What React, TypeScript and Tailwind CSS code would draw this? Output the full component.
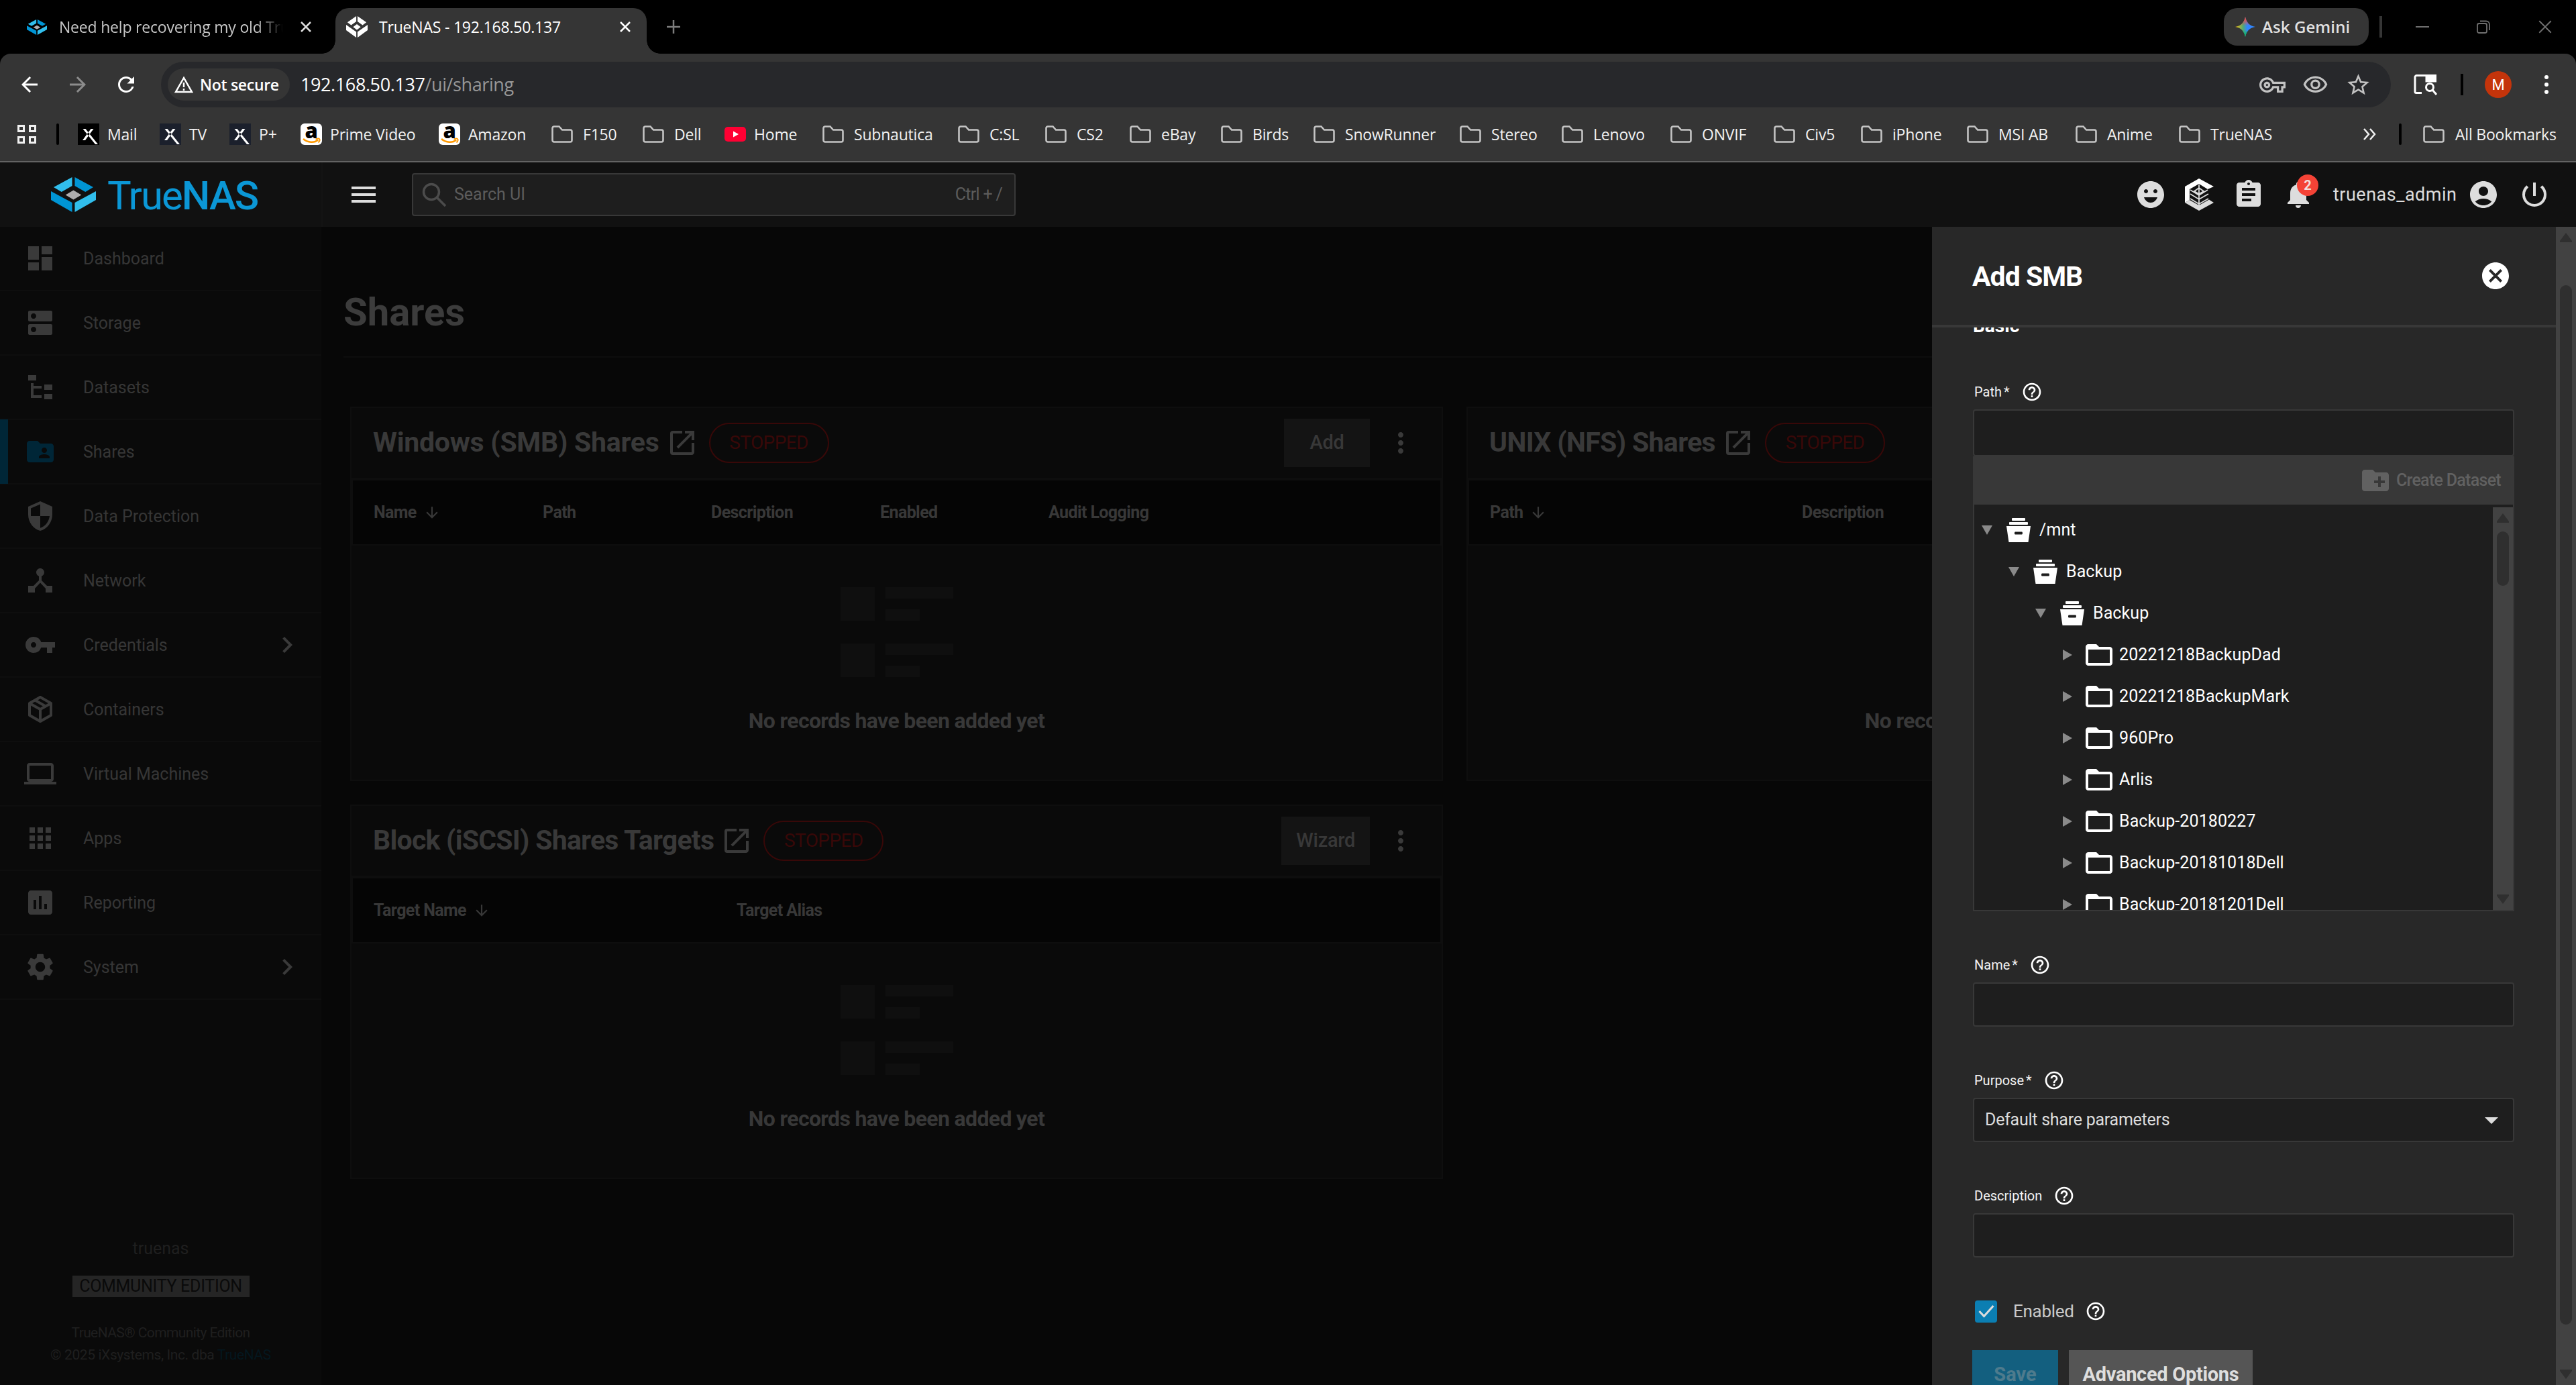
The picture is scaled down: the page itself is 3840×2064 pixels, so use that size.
import type { ReactNode } from "react";
import {
  MdAccountCircle,
  MdApps,
  MdArrowBack,
  MdArrowDownward,
  MdArrowDropDown,
  MdArrowForward,
  MdAssessment,
  MdAssignment,
  MdCancel,
  MdChevronRight,
  MdComputer,
  MdCreateNewFolder,
  MdDashboard,
  MdDeviceHub,
  MdDns,
  MdEmojiEmotions,
  MdFolderOpen,
  MdFolderShared,
  MdHelpOutline,
  MdMoreVert,
  MdNotifications,
  MdOpenInNew,
  MdOutlineVisibility,
  MdOutlineVpnKey,
  MdPowerSettingsNew,
  MdRefresh,
  MdSecurity,
  MdSettings,
  MdStarBorder,
  MdVpnKey,
} from "react-icons/md";

type Bookmark = {
  label: string;
  kind: "folder" | "x" | "xdark" | "amazon" | "youtube";
  width: string;
};

type NavItem = {
  label: string;
  icon: ReactNode;
  active?: boolean;
  expandable?: boolean;
};

type Column = { label: string; width: string; sorted?: boolean };

type TreeNode = { label: string; indent: string; open?: boolean };

const bookmarks: Bookmark[] = [
  { label: "Mail", kind: "x", width: "w-[122px]" },
  { label: "TV", kind: "xdark", width: "w-[104px]" },
  { label: "P+", kind: "xdark", width: "w-[106px]" },
  { label: "Prime Video", kind: "amazon", width: "w-[206px]" },
  { label: "Amazon", kind: "amazon", width: "w-[168px]" },
  { label: "F150", kind: "folder", width: "w-[136px]" },
  { label: "Dell", kind: "folder", width: "w-[122px]" },
  { label: "Home", kind: "youtube", width: "w-[146px]" },
  { label: "Subnautica", kind: "folder", width: "w-[202px]" },
  { label: "C:SL", kind: "folder", width: "w-[130px]" },
  { label: "CS2", kind: "folder", width: "w-[126px]" },
  { label: "eBay", kind: "folder", width: "w-[136px]" },
  { label: "Birds", kind: "folder", width: "w-[138px]" },
  { label: "SnowRunner", kind: "folder", width: "w-[218px]" },
  { label: "Stereo", kind: "folder", width: "w-[152px]" },
  { label: "Lenovo", kind: "folder", width: "w-[162px]" },
  { label: "ONVIF", kind: "folder", width: "w-[154px]" },
  { label: "Civ5", kind: "folder", width: "w-[130px]" },
  { label: "iPhone", kind: "folder", width: "w-[158px]" },
  { label: "MSI AB", kind: "folder", width: "w-[162px]" },
  { label: "Anime", kind: "folder", width: "w-[154px]" },
  { label: "TrueNAS", kind: "folder", width: "w-[160px]" },
];

const navItems: NavItem[] = [
  { label: "Dashboard", icon: <MdDashboard /> },
  { label: "Storage", icon: <MdDns /> },
  { label: "Datasets", icon: <TreeIcon /> },
  { label: "Shares", icon: <MdFolderShared />, active: true },
  { label: "Data Protection", icon: <MdSecurity /> },
  { label: "Network", icon: <MdDeviceHub /> },
  { label: "Credentials", icon: <MdVpnKey />, expandable: true },
  { label: "Containers", icon: <PackageIcon /> },
  { label: "Virtual Machines", icon: <MdComputer /> },
  { label: "Apps", icon: <MdApps /> },
  { label: "Reporting", icon: <MdAssessment /> },
  { label: "System", icon: <MdSettings />, expandable: true },
];

const smbColumns: Column[] = [
  { label: "Name", width: "w-[252px]", sorted: true },
  { label: "Path", width: "w-[251px]" },
  { label: "Description", width: "w-[252px]" },
  { label: "Enabled", width: "w-[251px]" },
  { label: "Audit Logging", width: "w-[252px]" },
];

const nfsColumns: Column[] = [
  { label: "Path", width: "w-[465px]", sorted: true },
  { label: "Description", width: "w-[465px]" },
];

const iscsiColumns: Column[] = [
  { label: "Target Name", width: "w-[541px]", sorted: true },
  { label: "Target Alias", width: "w-[541px]" },
];

const treeNodes: TreeNode[] = [
  { label: "/mnt", indent: "pl-[3px]", open: true },
  { label: "Backup", indent: "pl-[43px]", open: true },
  { label: "Backup", indent: "pl-[83px]", open: true },
  { label: "20221218BackupDad", indent: "pl-[123px]" },
  { label: "20221218BackupMark", indent: "pl-[123px]" },
  { label: "960Pro", indent: "pl-[123px]" },
  { label: "Arlis", indent: "pl-[123px]" },
  { label: "Backup-20180227", indent: "pl-[123px]" },
  { label: "Backup-20181018Dell", indent: "pl-[123px]" },
  { label: "Backup-20181201Dell", indent: "pl-[123px]" },
];

function TreeIcon() {
  return (
    <svg viewBox="0 0 24 24" width="1em" height="1em" fill="currentColor">
      <path d="M3 3h6v4H3V3m12 7h6v4h-6v-4m0 7h6v4h-6v-4m-2-4H7v5h6v2H5V9h2v2h6v2z" />
    </svg>
  );
}

function PackageIcon() {
  return (
    <svg viewBox="0 0 24 24" width="1em" height="1em" fill="currentColor">
      <path d="M21 16.5c0 .38-.21.71-.53.88l-7.9 4.44c-.16.12-.36.18-.57.18s-.41-.06-.57-.18l-7.9-4.44A.99.99 0 0 1 3 16.5v-9c0-.38.21-.71.53-.88l7.9-4.44c.16-.12.36-.18.57-.18s.41.06.57.18l7.9 4.44c.32.17.53.5.53.88v9M12 4.15l-1.89 1.07L16 8.61l1.96-1.11L12 4.15M6.04 7.5L12 10.85l1.96-1.1-5.88-3.4L6.04 7.5M5 15.91l6 3.38v-6.71L5 9.21v6.7m14 0v-6.7l-6 3.37v6.71l6-3.38z" />
    </svg>
  );
}

function TrueNasMark({ className, mono }: { className: string; mono?: boolean }) {
  const dark = mono ? "#ffffff" : "#0095d5";
  const light = mono ? "#ffffff" : "#31beec";
  return (
    <svg viewBox="0 0 68 52" className={className} preserveAspectRatio="none">
      <path d="M32 0v13L16 22 4 15z" fill={light} />
      <path d="M36 0v13l16 9 12-7z" fill={dark} />
      <path d="M34 19.500l12 7-12 7-12-7z" fill={mono ? "#ffffff" : "#aeadae"} />
      <path d="M0 21l32 17v14L0 34z" fill={dark} />
      <path d="M68 21L36 38v14l32-18z" fill={light} />
    </svg>
  );
}

function TrueCommandIcon() {
  return (
    <svg viewBox="0 0 44 48" className="h-12 w-11">
      <path d="M22 0L1 12v24l7-4V16l14-8 13 8 9-4z" fill="#fff" />
      <path d="M1 36l21 12 22-12-7-4.500-15 8.500L8 32z" fill="#dcdcdc" />
      <path
        d="M22 9v31M9 17l13 8 13-8M22 14l-7 5 7 4 7-4-7-5M9 23l13 8 14-8M9 30l13 8 14-8"
        fill="none"
        stroke="#dcdcdc"
        strokeWidth="1.800"
      />
    </svg>
  );
}

function PoolIcon() {
  return (
    <svg viewBox="0 0 36 36" className="h-9 w-9" fill="#fff">
      <rect x="8" y="0" width="20" height="4" rx="1" />
      <rect x="4" y="6" width="28" height="4" rx="1" />
      <path
        fillRule="evenodd"
        d="M0 12h36l-3.500 24h-29zM13 20.500c-1.300 0-1.300 4 0 4h10c1.300 0 1.300-4 0-4z"
      />
    </svg>
  );
}

function BookmarkFolder() {
  return (
    <svg viewBox="0 0 32 26" className="h-[26px] w-8 shrink-0">
      <path
        d="M1.500 4A2.500 2.500 0 0 1 4 1.500h7.500l4.500 5h12A2.500 2.500 0 0 1 30.500 9v13A2.500 2.500 0 0 1 28 24.500H4A2.500 2.500 0 0 1 1.500 22z"
        fill="none"
        stroke="#c4c4c4"
        strokeWidth="2.600"
      />
    </svg>
  );
}

function XfinityIcon({ dark }: { dark?: boolean }) {
  return (
    <svg viewBox="0 0 32 32" className="h-8 w-8 shrink-0">
      <rect width="32" height="32" fill={dark ? "#1b202c" : "#000"} />
      <path d="M7.500 8L26 31h4L11.500 8zM19.500 8h4l-12.500 17H7z" fill="#fff" />
    </svg>
  );
}

function AmazonIcon() {
  return (
    <div className="relative flex h-8 w-8 shrink-0 items-start justify-center rounded-md bg-white">
      <span className="font-['Open_Sans'] text-[31px] leading-[20px] font-extrabold text-black">a</span>
      <svg viewBox="0 0 32 32" className="absolute inset-0">
        <path d="M4 23c7 6 17 6 22 1.500" fill="none" stroke="#ff9900" strokeWidth="2.600" />
        <path d="M22.500 23.500c3-1.500 5.500-1.200 6 0s-.5 3.500-2 5" fill="none" stroke="#ff9900" strokeWidth="1.800" />
      </svg>
    </div>
  );
}

function BookmarkIcon({ kind }: { kind: Bookmark["kind"] }) {
  if (kind === "folder") return <BookmarkFolder />;
  if (kind === "amazon") return <AmazonIcon />;
  if (kind === "youtube") {
    return (
      <svg viewBox="0 0 32 32" className="h-8 w-8 shrink-0">
        <rect y="5" width="32" height="22" rx="5" fill="#ff0033" />
        <path d="M13 11.500v9l8-4.500z" fill="#fff" />
      </svg>
    );
  }
  return <XfinityIcon dark={kind === "xdark"} />;
}

function CrossIcon({ className }: { className: string }) {
  return (
    <svg viewBox="0 0 16 16" className={className} stroke="currentColor" fill="none">
      <path d="M1 1l14 14M15 1L1 15" />
    </svg>
  );
}

function TabStrip() {
  return (
    <div className="flex h-20 items-end bg-black text-[23px] tracking-[-0.2px]">
      <div className="flex h-20 w-[500px] items-center pl-10 text-[#c7c7c7]">
        <TrueNasMark className="h-[23px] w-[30px]" />
        <div className="ml-[18px] w-[334px] overflow-hidden whitespace-nowrap [mask-image:linear-gradient(to_right,black_295px,transparent_334px)]">
          Need help recovering my old TrueNAS
        </div>
        <CrossIcon className="ml-[26px] h-4 w-4 stroke-[2.5] text-[#dcdcdc]" />
      </div>
      <div className="relative flex h-[68px] w-[464px] items-center rounded-t-[20px] bg-[#353535] pb-3 pl-4 text-white">
        <TrueNasMark mono className="h-8 w-8" />
        <div className="ml-[17px] w-[359px] whitespace-nowrap">TrueNAS - 192.168.50.137</div>
        <CrossIcon className="h-4 w-4 stroke-[2.5]" />
        {/* outward curves at the foot of the active tab */}
        <div className="absolute bottom-0 -left-5 h-5 w-5 bg-[radial-gradient(circle_at_0_0,#000_19.5px,#353535_20px)]" />
        <div className="absolute -right-5 bottom-0 h-5 w-5 bg-[radial-gradient(circle_at_100%_0,#000_19.5px,#353535_20px)]" />
      </div>
      <div className="flex h-20 flex-1 items-center pl-[30px]">
        <svg viewBox="0 0 20 20" className="h-5 w-5" stroke="#7d7d7d" strokeWidth="2.500">
          <path d="M10 0v20M0 10h20" />
        </svg>
        <div className="ml-auto flex h-14 w-[216px] items-center rounded-[20px] bg-[#353535] pl-4 font-semibold text-[#dfdfdf]">
          <svg viewBox="0 0 32 32" className="h-8 w-8">
            <defs>
              <linearGradient id="gem" x1="0" y1="0.5" x2="1" y2="0.5">
                <stop offset="0" stopColor="#fbbc04" />
                <stop offset="0.4" stopColor="#4fa878" />
                <stop offset="0.6" stopColor="#3186ff" />
                <stop offset="1" stopColor="#3186ff" />
              </linearGradient>
              <linearGradient id="gemTop" x1="0.5" y1="0" x2="0.5" y2="1">
                <stop offset="0.1" stopColor="#f94543" />
                <stop offset="0.45" stopColor="#f94543" stopOpacity="0" />
                <stop offset="0.65" stopColor="#08b962" stopOpacity="0" />
                <stop offset="0.9" stopColor="#08b962" />
              </linearGradient>
            </defs>
            <path d="M16 1c1.500 8 6 13.500 15 15-9 1.500-13.500 7-15 15-1.500-8-6-13.500-15-15 9-1.500 13.500-7 15-15z" fill="url(#gem)" />
            <path d="M16 1c1.500 8 6 13.500 15 15-9 1.500-13.500 7-15 15-1.500-8-6-13.500-15-15 9-1.500 13.500-7 15-15z" fill="url(#gemTop)" />
          </svg>
          <span className="ml-[9px] text-2xl tracking-[0.1px] whitespace-nowrap">Ask Gemini</span>
        </div>
        <div className="ml-4 h-8 w-1 bg-[#353535]" />
        <div className="ml-[50px] h-[2px] w-5 bg-[#6f6f6f]" />
        <svg viewBox="0 0 20 20" className="ml-[71px] h-5 w-5" fill="none" stroke="#6f6f6f" strokeWidth="1.800">
          <rect x="1" y="5" width="14" height="14" rx="2.500" />
          <path d="M5 1.500h9a5 5 0 0 1 5 5V15" />
        </svg>
        <CrossIcon className="mr-9 ml-[72px] h-5 w-5 stroke-[1.5] text-[#6f6f6f]" />
      </div>
    </div>
  );
}

function Toolbar() {
  return (
    <div className="bg-black">
      <div className="flex h-20 items-center rounded-t-[16px] bg-[#353535] pt-3">
        <MdArrowBack className="ml-[26px] text-[36px] text-white" />
        <MdArrowForward className="ml-9 text-[36px] text-[#8c8c8c]" />
        <MdRefresh className="ml-9 text-[36px] text-white" />
        <div className="ml-[34px] flex h-[68px] w-[3324px] items-center rounded-full bg-[#27282b] pl-[10px]">
          <div className="flex h-12 w-[182px] items-center rounded-full bg-[#353535] pl-[10px]">
            <svg viewBox="0 0 28 26" className="h-[26px] w-7" fill="none" stroke="#fff" strokeWidth="2.500">
              <path d="M14 3L2 24h24z" />
              <path d="M14 10v7M14 19v3" />
            </svg>
            <span className="ml-[10px] text-[23px] font-semibold tracking-[-0.3px] whitespace-nowrap text-white">Not secure</span>
          </div>
          <div className="ml-4 text-[27px] tracking-[-0.4px] text-white">
            192.168.50.137<span className="text-[#979797]">/ui/sharing</span>
          </div>
          <div className="mr-[29px] ml-auto flex items-center gap-[25px] text-[39px] text-[#c2c2c2]">
            <MdOutlineVpnKey />
            <MdOutlineVisibility />
            <MdStarBorder />
          </div>
        </div>
        <svg viewBox="0 0 36 32" className="ml-[34px] h-8 w-9" fill="none" stroke="#fff" strokeWidth="3">
          <path d="M12 28.500H4A2 2 0 0 1 2 26.500V5A2.500 2.500 0 0 1 4.500 2.500h26A2.500 2.500 0 0 1 32.500 5v7" />
          <path d="M19 2.500h13.500V11H19z" fill="#fff" />
          <circle cx="24" cy="20" r="5.500" />
          <path d="M28 24l6 7" />
        </svg>
        <div className="ml-[34px] h-8 w-1 bg-black" />
        <div className="ml-8 flex h-10 w-10 items-center justify-center rounded-full bg-[#c4340b] font-['Roboto'] text-[22px] text-white">
          M
        </div>
        <div className="ml-[49px] flex flex-col gap-[5px]">
          <div className="h-[6px] w-[6px] rounded-full bg-white" />
          <div className="h-[6px] w-[6px] rounded-full bg-white" />
          <div className="h-[6px] w-[6px] rounded-full bg-white" />
        </div>
      </div>
    </div>
  );
}

function BookmarksBar() {
  return (
    <div className="flex h-[82px] items-center border-b-2 border-[#636363] bg-[#353535] text-[23px] tracking-[-0.2px] whitespace-nowrap text-[#f1f1f1]">
      <svg viewBox="0 0 28 28" className="ml-[26px] h-7 w-7" fill="none" stroke="#f1f1f1" strokeWidth="3">
        <path d="M1.500 1.500h8v8h-8zM18.500 1.500h8v8h-8zM1.500 18.500h8v8h-8zM18.500 18.500h8v8h-8z" />
      </svg>
      <div className="mr-7 ml-[30px] h-8 w-1 rounded bg-black" />
      {bookmarks.map((b) => (
        <div key={b.label} className={`flex shrink-0 items-center ${b.width} ${b.kind === "folder" ? "gap-[15px]" : "gap-3"}`}>
          <BookmarkIcon kind={b.kind} />
          <span>{b.label}</span>
        </div>
      ))}
      <svg viewBox="0 0 20 18" className="ml-auto h-[18px] w-5" fill="none" stroke="#f1f1f1" strokeWidth="2.500">
        <path d="M2 1l7 8-7 8M11 1l7 8-7 8" />
      </svg>
      <div className="mr-8 ml-[34px] h-8 w-1 rounded bg-black" />
      <div className="flex w-[228px] items-center gap-4">
        <BookmarkFolder />
        <span>All Bookmarks</span>
      </div>
    </div>
  );
}

function TopBar() {
  return (
    <header className="flex h-24 items-center bg-[#111111] text-[#dddddd]">
      <div className="flex h-full w-[481px] items-center border-r-2 border-[#141414] pl-[76px]">
        <TrueNasMark className="h-[52px] w-[67px]" />
        <div className="ml-[17px] pt-[3px] text-[60px] leading-[60px] tracking-[-2px] text-[#0b97d6]">
          True<span className="font-medium">NAS</span>
        </div>
      </div>
      <div className="ml-[43px] flex w-9 flex-col gap-[6px]">
        <div className="h-1 bg-[#dddddd]" />
        <div className="h-1 bg-[#dddddd]" />
        <div className="h-1 bg-[#dddddd]" />
      </div>
      <div className="ml-[54px] flex h-16 w-[900px] items-center rounded border-2 border-[#383838] bg-[#1e1e1e] text-[25px] text-[#5c5c5c]">
        <svg viewBox="0 0 36 36" className="ml-[13px] h-9 w-9" fill="none" stroke="#4c4c4c" strokeWidth="3.500">
          <circle cx="14" cy="14" r="11.500" />
          <path d="M22.500 22.500L35 35" />
        </svg>
        <span className="ml-3">Search UI</span>
        <span className="mr-[18px] ml-auto tracking-[-0.7px]">Ctrl + /</span>
      </div>
      <div className="mr-[38px] ml-auto flex items-center">
        <MdEmojiEmotions className="text-[48px]" />
        <div className="ml-[26px]">
          <TrueCommandIcon />
        </div>
        <MdAssignment className="ml-[28px] text-[48px]" />
        <div className="relative ml-[26px]">
          <MdNotifications className="text-[48px]" />
          <div className="absolute -top-[6px] left-[22px] flex h-8 w-8 items-center justify-center rounded-full bg-[#f44336] text-[20px] font-bold text-[#f3dedc]">
            2
          </div>
        </div>
        <span className="ml-[28px] w-[200px] text-[27px] tracking-[0.5px]">truenas_admin</span>
        <MdAccountCircle className="text-[48px]" />
        <MdPowerSettingsNew className="ml-[28px] text-[48px]" />
      </div>
    </header>
  );
}

function Sidebar() {
  return (
    <nav className="flex w-[479px] flex-col bg-[#0a0a0a] text-[25px] text-[#363636]">
      {navItems.map((item) => (
        <div
          key={item.label}
          className="flex h-[96px] shrink-0 items-center border-b-2 border-[#0e0e0e]"
        >
          <div className={`h-[96px] w-3 ${item.active ? "bg-[#002637]" : ""}`} />
          <div className={`ml-6 text-[48px] ${item.active ? "text-[#002637]" : "text-[#3a3a3a]"}`}>{item.icon}</div>
          <span className="ml-[40px] pt-[2px]">{item.label}</span>
          {item.expandable && <MdChevronRight className="mr-[27px] ml-auto text-[48px] text-[#3a3a3a]" />}
        </div>
      ))}
      <div className="mt-[343px] flex flex-col items-center text-[#1f1f1f]">
        <div className="h-[56px] leading-[56px]">truenas</div>
        <div className="mt-[12px] flex h-8 w-[264px] items-center justify-center bg-[#252525] text-[25px] tracking-[-0.3px] whitespace-nowrap text-[#0a0a0a]">
          COMMUNITY EDITION
        </div>
        <div className="mt-[37px] text-center text-[21px] leading-[33px] whitespace-nowrap">
          <div className="tracking-[-0.6px]">TrueNAS® Community Edition</div>
          <div className="tracking-[-0.4px]">
            © 2025 iXsystems, Inc. dba <span className="text-[#04171f]">TrueNAS</span>
          </div>
        </div>
      </div>
    </nav>
  );
}

type ShareCardProps = {
  title: string;
  titleTracking: string;
  action?: string;
  columns: Column[];
};

function ShareCard({ title, titleTracking, action, columns }: ShareCardProps) {
  return (
    <section className="h-[558px] w-[1629px] shrink-0 border-2 border-[#0e0e0e] bg-[#0a0a0a]">
      <div className="flex h-[104px] items-center pr-[37px] pl-8">
        <h2 className={`text-[41px] font-bold whitespace-nowrap text-[#393939] ${titleTracking}`}>{title}</h2>
        <MdOpenInNew className="ml-[10px] text-[48px] text-[#3a3a3a]" />
        <div className="ml-4 flex h-[60px] w-[179px] items-center justify-center rounded-[30px] border-2 border-[#380808] text-[28px] tracking-[-0.6px] text-[#380808]">
          STOPPED
        </div>
        {action && (
          <div className="ml-auto flex h-[72px] min-w-[128px] items-center justify-center bg-[#141414] px-[22px] text-[29px] font-medium tracking-[-0.3px]">
            {action}
          </div>
        )}
        <MdMoreVert className={`text-[48px] text-[#3a3a3a] ${action ? "ml-[22px]" : "ml-auto"}`} />
      </div>
      <div className="flex h-[101px] items-center border-2 border-t-4 border-[#0e0e0e] bg-[#050505] pl-[31px] text-[25px] font-bold tracking-[-0.6px]">
        {columns.map((col) => (
          <div key={col.label} className={`flex items-center ${col.width}`}>
            {col.label}
            {col.sorted && <MdArrowDownward className="ml-[10px] text-[26px]" />}
          </div>
        ))}
      </div>
      <div className="flex flex-col items-center pt-[62px]">
        <svg viewBox="0 0 168 134" className="h-[134px] w-[168px]" fill="#0f0f0f">
          <path d="M0 0h51v50H0zM67 0h101v17H67zM67 33h51v17H67zM0 84h51v50H0zM67 84h101v17H67zM67 117h51v17H67z" />
        </svg>
        <div className="mt-[45px] text-[32px] leading-[40px] font-bold tracking-[-0.65px] whitespace-nowrap text-[#383838]">
          No records have been added yet
        </div>
      </div>
    </section>
  );
}

function SharesPage() {
  return (
    <main className="flex-1 overflow-hidden bg-[#070707] text-[#383838]">
      <div className="ml-[33px] h-[195px] border-b-2 border-[#0d0d0d] pt-[97px]">
        <h1 className="text-[58px] leading-[60px] font-bold text-[#3c3c3c]">Shares</h1>
      </div>
      <div className="mt-[73px] ml-[43px] flex w-[3294px] flex-wrap gap-x-[35px] gap-y-[35px]">
        <ShareCard title="Windows (SMB) Shares" titleTracking="tracking-[-0.25px]" action="Add" columns={smbColumns} />
        <ShareCard title="UNIX (NFS) Shares" titleTracking="tracking-[-0.65px]" columns={nfsColumns} />
        <ShareCard
          title="Block (iSCSI) Shares Targets"
          titleTracking="tracking-[-0.75px]"
          action="Wizard"
          columns={iscsiColumns}
        />
      </div>
    </main>
  );
}

function FieldLabel({ label, required }: { label: string; required?: boolean }) {
  return (
    <div className="flex h-8 items-center pl-[2px] text-[20px] text-[#f3f3f3]">
      <span>{label}</span>
      {required && <span className="ml-[3px]">*</span>}
      <MdHelpOutline className="ml-[17px] text-[32px] text-white" />
    </div>
  );
}

function Field({ label, required, children }: { label: string; required?: boolean; children?: ReactNode }) {
  return (
    <div className="h-[172px]">
      <FieldLabel label={label} required={required} />
      <div className="mt-[10px] flex h-[66px] items-center justify-between rounded border-2 border-[#383838] bg-[#1e1e1e] pr-2 pl-4 text-[25px] tracking-[-0.25px] text-[#dddddd]">
        {children}
      </div>
    </div>
  );
}

function PathTree() {
  return (
    <div className="flex h-[606px] border-2 border-t-0 border-[#383838] bg-[#1e1e1e]">
      <div className="flex-1 overflow-hidden pt-[7px] text-[25px] tracking-[0.1px] text-white">
        {treeNodes.map((node, i) => (
          <div key={i} className={`flex h-[62px] items-center ${node.indent}`}>
            <svg viewBox="0 0 28 20" className="h-5 w-7 shrink-0" fill="#8a8a8a">
              {node.open ? <path d="M8 3h16L16 17z" /> : <path d="M9 2v16l14-8z" />}
            </svg>
            {node.open ? (
              <div className="ml-[17px] w-[49px]">
                <PoolIcon />
              </div>
            ) : (
              <MdFolderOpen className="mr-[6px] ml-[11px] shrink-0 text-[48px]" />
            )}
            <span>{node.label}</span>
          </div>
        ))}
      </div>
      <div className="mt-1 flex w-[30px] flex-col items-center justify-between bg-[#424242]">
        <svg viewBox="0 0 18 120" className="mt-[9px] h-[120px] w-[18px]" fill="#2f2f2f">
          <path d="M9 0l9 12v2H0v-2z" />
          <rect y="27" width="18" height="81" rx="9" />
        </svg>
        <svg viewBox="0 0 18 14" className="mb-[9px] h-[14px] w-[18px]" fill="#2f2f2f">
          <path d="M0 0h18v2L9 14 0 2z" />
        </svg>
      </div>
    </div>
  );
}

function AddSmbPanel() {
  return (
    <aside className="absolute top-0 right-0 flex h-full w-[960px] bg-[#282828]">
      <div className="flex w-[930px] flex-col overflow-hidden">
        <div className="flex h-[150px] shrink-0 items-center justify-between border-b-4 border-[#383838] pr-[66px] pl-[60px]">
          <h2 className="pt-[3px] text-[41px] font-bold tracking-[-1px] text-white">Add SMB</h2>
          <MdCancel className="text-[48px] text-white" />
        </div>
        <div className="h-[1576px] overflow-hidden pr-[62px] pl-[61px]">
          <div className="-mt-[20px] text-[28px] leading-[36px] font-bold text-white">Basic</div>
          <div className="mt-[64px]">
            <FieldLabel label="Path" required />
          </div>
          <div className="mt-[10px] h-[70px] rounded border-2 border-[#383838] bg-[#1e1e1e]" />
          <div className="flex h-[72px] items-center justify-end bg-[#383838] pr-5 text-[25px] font-medium tracking-[-0.7px] text-[#616161]">
            <MdCreateNewFolder className="mr-[7px] text-[48px]" />
            Create Dataset
          </div>
          <PathTree />
          <div className="mt-[64px]">
            <Field label="Name" required />
            <Field label="Purpose" required>
              <span>Default share parameters</span>
              <MdArrowDropDown className="text-[48px]" />
            </Field>
            <Field label="Description" />
          </div>
          <div className="flex h-8 items-center">
            <div className="ml-[3px] flex h-[33px] w-[33px] items-center justify-center rounded bg-[#0b7eb2]">
              <svg viewBox="0 0 24 20" className="h-5 w-6" fill="none" stroke="#dcdcdc" strokeWidth="3">
                <path d="M1.500 10l7 7.500L22.500 2" />
              </svg>
            </div>
            <span className="ml-6 text-[26px] tracking-[-0.3px] text-[#c9c9c9]">Enabled</span>
            <MdHelpOutline className="ml-4 text-[32px] text-white" />
          </div>
          <div className="mt-[42px] -ml-px flex gap-4 text-[29px] font-bold">
            <div className="flex h-[73px] w-32 items-center justify-center bg-[#135f7f] pt-px text-[#4e7b8d]">Save</div>
            <div className="flex h-[73px] w-[274px] items-center justify-center bg-[#555555] pt-px tracking-[-0.3px] text-[#dedede]">
              Advanced Options
            </div>
          </div>
        </div>
      </div>
      <div className="flex w-[30px] flex-col items-center justify-between bg-[#424242] py-[9px]">
        <svg viewBox="0 0 18 14" className="h-[14px] w-[18px]" fill="#2f2f2f">
          <path d="M9 0l9 12v2H0v-2z" />
        </svg>
        <div className="mt-[9px] mb-[12px] h-[1549px] w-[18px] rounded-full bg-[#2f2f2f]" />
        <svg viewBox="0 0 18 14" className="h-[14px] w-[18px]" fill="#2f2f2f">
          <path d="M0 0h18v2L9 14 0 2z" />
        </svg>
      </div>
    </aside>
  );
}

export default function App() {
  return (
    <div className="flex h-[2064px] w-[3840px] flex-col overflow-hidden bg-black">
      <div className="font-['Open_Sans',sans-serif]">
        <TabStrip />
        <Toolbar />
        <BookmarksBar />
      </div>
      <div className="flex flex-1 flex-col overflow-hidden font-['Roboto',sans-serif]">
        <TopBar />
        <div className="relative flex flex-1 overflow-hidden">
          <Sidebar />
          <SharesPage />
          <AddSmbPanel />
        </div>
      </div>
    </div>
  );
}
